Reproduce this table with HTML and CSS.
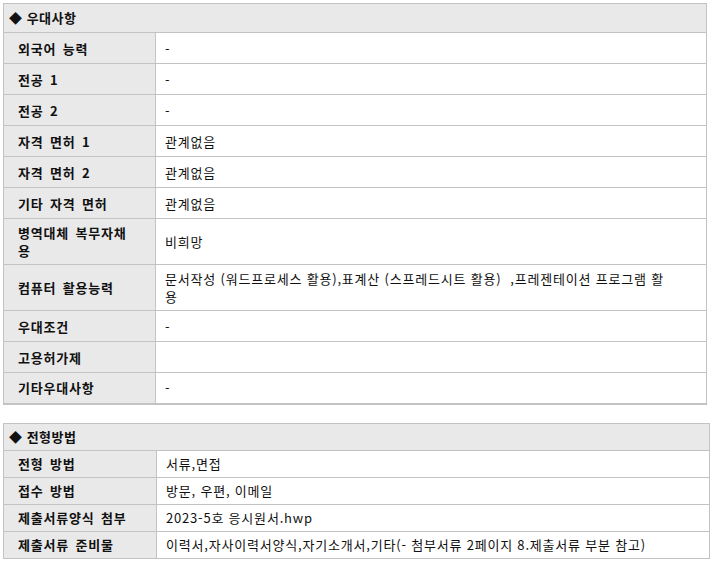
FILE: index.html
```html
<!DOCTYPE html>
<html lang="ko">
<head>
<meta charset="utf-8">
<title>우대사항 / 전형방법</title>
<link rel="stylesheet" href="styles.css">
</head>
<body>
<table class="info info-pref">
  <colgroup><col class="col-label"><col></colgroup>
  <thead>
    <tr><th colspan="2" class="title">◆ 우대사항</th></tr>
  </thead>
  <tbody>
    <tr><th>외국어 능력</th><td>-</td></tr>
    <tr><th>전공 1</th><td>-</td></tr>
    <tr><th>전공 2</th><td>-</td></tr>
    <tr><th>자격 면허 1</th><td>관계없음</td></tr>
    <tr><th>자격 면허 2</th><td>관계없음</td></tr>
    <tr><th>기타 자격 면허</th><td>관계없음</td></tr>
    <tr><th>병역대체 복무자채용</th><td>비희망</td></tr>
    <tr><th>컴퓨터 활용능력</th><td>문서작성 (워드프로세스 활용),표계산 (스프레드시트 활용) &nbsp;,프레젠테이션 프로그램 활용</td></tr>
    <tr><th>우대조건</th><td>-</td></tr>
    <tr><th>고용허가제</th><td></td></tr>
    <tr><th>기타우대사항</th><td>-</td></tr>
  </tbody>
</table>

<table class="info info-method">
  <colgroup><col class="col-label"><col></colgroup>
  <thead>
    <tr><th colspan="2" class="title">◆ 전형방법</th></tr>
  </thead>
  <tbody>
    <tr><th>전형 방법</th><td>서류,면접</td></tr>
    <tr><th>접수 방법</th><td>방문, 우편, 이메일</td></tr>
    <tr><th>제출서류양식 첨부</th><td>2023-5호 응시원서.hwp</td></tr>
    <tr><th>제출서류 준비물</th><td>이력서,자사이력서양식,자기소개서,기타(- 첨부서류 2페이지 8.제출서류 부분 참고)</td></tr>
  </tbody>
</table>
</body>
</html>
```

FILE: styles.css
```css
html, body {
  margin: 0;
  padding: 0;
  background: #ffffff;
}

body {
  padding: 3px;
  font-family: "Noto Sans CJK KR", "Noto Sans", sans-serif;
  font-size: 13px;
  color: #111;
}

.info {
  border-collapse: collapse;
  table-layout: fixed;
  border: 1px solid #c3c3c3;
}

.info-pref {
  width: 704px;
  border-bottom: 2px solid #c3c3c3;
}

.info-method {
  width: 707px;
  margin-top: 18px;
}

.info-pref .col-label {
  width: 152px;
}

.info-method .col-label {
  width: 153px;
}

.info th,
.info td {
  border: 1px solid #c3c3c3;
  line-height: 18px;
  text-align: left;
  vertical-align: middle;
}

.info th {
  background: #e9e9e9;
  font-weight: bold;
  letter-spacing: 0.8px;
  word-spacing: 2px;
  padding: 5px 20px 4px 14px;
}

.info td {
  background: #ffffff;
  padding: 5px 38px 4px 9px;
  font-weight: normal;
  letter-spacing: 0.8px;
}

.info-pref tbody tr {
  height: 31px;
}

.info th.title {
  padding: 5px 5px;
  letter-spacing: 0.5px;
  word-spacing: 0;
}

.info-method th,
.info-method td {
  padding-top: 4px;
  padding-bottom: 4px;
}

.info-method th.title {
  padding: 4px 5px;
}
```
